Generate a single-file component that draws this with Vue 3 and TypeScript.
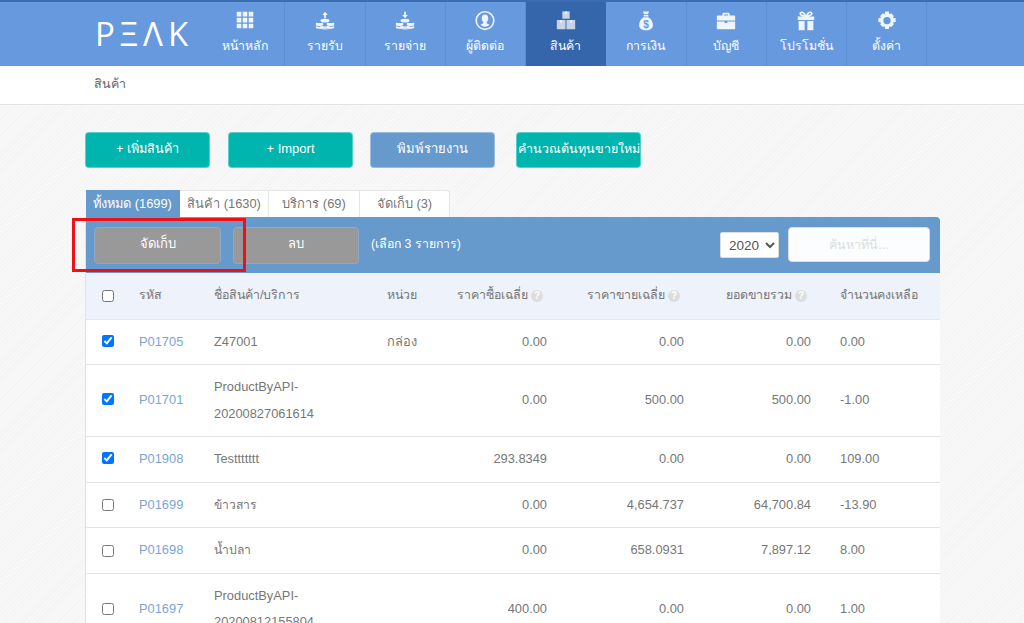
<script setup lang="ts">
interface Product {
  checked: boolean
  code: string
  name: string[]
  unit: string
  buy: string
  sell: string
  total: string
  remain: string
  thai?: boolean
}

const navItems = [
  { key: 'home', label: 'หน้าหลัก' },
  { key: 'income', label: 'รายรับ' },
  { key: 'expense', label: 'รายจ่าย' },
  { key: 'contact', label: 'ผู้ติดต่อ' },
  { key: 'product', label: 'สินค้า', active: true },
  { key: 'money', label: 'การเงิน' },
  { key: 'account', label: 'บัญชี' },
  { key: 'promo', label: 'โปรโมชั่น' },
  { key: 'setting', label: 'ตั้งค่า' },
]

const tabs = [
  { label: 'ทั้งหมด (1699)', width: 94, active: true },
  { label: 'สินค้า (1630)', width: 89 },
  { label: 'บริการ (69)', width: 91 },
  { label: 'จัดเก็บ (3)', width: 90 },
]

const products: Product[] = [
  { checked: true, code: 'P01705', name: ['Z47001'], unit: 'กล่อง', buy: '0.00', sell: '0.00', total: '0.00', remain: '0.00' },
  { checked: true, code: 'P01701', name: ['ProductByAPI-', '20200827061614'], unit: '', buy: '0.00', sell: '500.00', total: '500.00', remain: '-1.00' },
  { checked: true, code: 'P01908', name: ['Testtttttt'], unit: '', buy: '293.8349', sell: '0.00', total: '0.00', remain: '109.00' },
  { checked: false, code: 'P01699', name: ['ข้าวสาร'], unit: '', buy: '0.00', sell: '4,654.737', total: '64,700.84', remain: '-13.90', thai: true },
  { checked: false, code: 'P01698', name: ['น้ำปลา'], unit: '', buy: '0.00', sell: '658.0931', total: '7,897.12', remain: '8.00', thai: true },
  { checked: false, code: 'P01697', name: ['ProductByAPI-', '20200812155804'], unit: '', buy: '400.00', sell: '0.00', total: '0.00', remain: '1.00' },
]
</script>

<template>
  <div class="page">
    <header class="topbar">
      <div class="logo">PΞΛK</div>
      <nav class="menu">
        <a v-for="item in navItems" :key="item.key" class="menu-item" :class="{ active: item.active }">
          <svg class="menu-icon" viewBox="0 0 24 24" fill="currentColor">
            <template v-if="item.key === 'home'">
              <path d="M3 2h5v5H3zM9.500 2h5v5h-5zM16 2h5v5h-5zM3 8.500h5v5H3zM9.500 8.500h5v5h-5zM16 8.500h5v5h-5zM3 15h5v5H3zM9.500 15h5v5h-5zM16 15h5v5h-5z" />
            </template>
            <template v-else-if="item.key === 'income' || item.key === 'expense'">
              <path v-if="item.key === 'income'" d="M12 2l3 3.500h-2V9h-2V5.500H9z" />
              <path v-else d="M11 2h2v3.500h2L12 9 9 5.500h2z" />
              <ellipse cx="12" cy="11.500" rx="5" ry="2" />
              <path d="M2 13.500c1 1 6 1 8 0v3c-2 1.200-7 1.200-8 0zM14 13.500c2 1 7 1 8 0v3c-1 1.200-6 1.200-8 0zM2 17.500c1 1 6 1 8 0v2c-2 1.200-7 1.200-8 0zM14 17.500c2 1 7 1 8 0v2c-1 1.200-6 1.200-8 0z" />
              <path d="M7 17c2 1 8 1 10 0v3.500c-2 1.200-8 1.200-10 0z" opacity=".8" />
            </template>
            <template v-else-if="item.key === 'contact'">
              <path fill-rule="evenodd" d="M12 1a10.500 10.500 0 1 0 0 21 10.500 10.500 0 0 0 0-21zm0 1.800a8.700 8.700 0 1 1 0 17.400 8.700 8.700 0 0 1 0-17.400z" />
              <path d="M12 5c2.300 0 3.600 1.800 3.600 4s-1 3.500-1.800 4.200v1.300l3.200 1.700a7 7 0 0 1-10 0l3.200-1.700v-1.300C9.400 12.500 8.400 11.200 8.400 9c0-2.200 1.300-4 3.600-4z" />
            </template>
            <template v-else-if="item.key === 'product'">
              <path d="M8 1.500h8v8H8z" opacity=".8" />
              <path d="M2 11h9.500v10H2zM12.500 11H22v10h-9.500z" opacity=".8" />
              <path d="M11 1.500h2v3h-2zM5.500 11h2v3h-2zM16.500 11h2v3h-2z" />
            </template>
            <template v-else-if="item.key === 'money'">
              <path d="M8.500 1.500h7l-1.500 3h-4zM9.500 5.500h5v1.500h-5zM9.500 8C6 10 4.500 13.500 4.500 16.500c0 3.500 3 5.500 7.500 5.500s7.500-2 7.500-5.500c0-3-1.500-6.500-5-8.500z" />
              <text x="12" y="19.500" text-anchor="middle" class="dollar">$</text>
            </template>
            <template v-else-if="item.key === 'account'">
              <path fill-rule="evenodd" d="M8 6V4.500C8 3.700 8.700 3 9.500 3h5c.8 0 1.500.7 1.500 1.500V6h5c.6 0 1 .4 1 1v4.500H2V7c0-.6.4-1 1-1zm1.800 0h4.400V4.800H9.800z" />
              <path d="M2 12.500h8.500v1.800h3v-1.800H22V20c0 .6-.4 1-1 1H3c-.6 0-1-.4-1-1z" />
            </template>
            <template v-else-if="item.key === 'promo'">
              <path fill-rule="evenodd" d="M3 7h6.500C7 7 4.800 6 4.800 3.800 4.800 2.500 5.900 1.500 7.300 1.500c2.200 0 3.800 1.900 4.700 4 .9-2.100 2.500-4 4.700-4 1.400 0 2.500 1 2.500 2.300C19.200 6 17 7 14.500 7H21v4H3zM7.300 3.200c-.4 0-.8.300-.8.700 0 1 1.800 1.500 3.400 1.600-.6-1.200-1.500-2.300-2.600-2.300zm9.400 0c-1.100 0-2 1.100-2.600 2.300 1.600-.1 3.400-.6 3.400-1.600 0-.4-.4-.7-.8-.7z" />
              <path d="M4 12h6.500v10H4zM13.500 12H20v10h-6.500z" />
            </template>
            <template v-else>
              <path fill-rule="evenodd" d="M10 1.500h4l.6 3 2-.9 2.900 2.900-1 2 3 .6v4l-3 .6 1 2-2.900 2.900-2-1-.6 3h-4l-.6-3-2 1-2.900-2.900 1-2-3-.6v-4l3-.6-1-2 2.900-2.900 2 .9zM12 7.500a4 4 0 1 0 0 8 4 4 0 0 0 0-8z" />
            </template>
          </svg>
          <span>{{ item.label }}</span>
        </a>
      </nav>
    </header>

    <div class="crumb">สินค้า</div>

    <main class="content">
      <div class="actions">
        <button class="btn teal thai-text">+ เพิ่มสินค้า</button>
        <button class="btn teal">+ Import</button>
        <button class="btn blue">พิมพ์รายงาน</button>
        <button class="btn teal narrow">คำนวณต้นทุนขายใหม่</button>
      </div>

      <div class="tabs">
        <a v-for="tab in tabs" :key="tab.label" class="tab" :class="{ active: tab.active }" :style="{ width: tab.width + 'px' }">{{ tab.label }}</a>
      </div>

      <section class="panel">
        <div class="toolbar">
          <button class="btn grey">จัดเก็บ</button>
          <button class="btn grey">ลบ</button>
          <span class="selected">(เลือก 3 รายการ)</span>
          <select class="year">
            <option>2020</option>
          </select>
          <input class="search" placeholder="ค้นหาที่นี่..." />
        </div>
        <div class="highlight"></div>

        <table class="grid">
          <colgroup>
            <col style="width: 41px" />
            <col style="width: 75px" />
            <col style="width: 158px" />
            <col style="width: 69px" />
            <col style="width: 130px" />
            <col style="width: 137px" />
            <col style="width: 127px" />
            <col />
          </colgroup>
          <thead>
            <tr>
              <th class="check"><input type="checkbox" /></th>
              <th>รหัส</th>
              <th>ชื่อสินค้า/บริการ</th>
              <th class="num">หน่วย</th>
              <th class="num">ราคาซื้อเฉลี่ย <i class="help">?</i></th>
              <th class="num">ราคาขายเฉลี่ย <i class="help">?</i></th>
              <th class="num">ยอดขายรวม <i class="help">?</i></th>
              <th class="remain">จำนวนคงเหลือ</th>
            </tr>
          </thead>
          <tbody>
            <tr v-for="p in products" :key="p.code">
              <td class="check"><input type="checkbox" :checked="p.checked" :class="{ ticked: p.checked }" /></td>
              <td><a class="code">{{ p.code }}</a></td>
              <td :class="{ 'thai-text': p.thai }">
                <div v-for="line in p.name" :key="line">{{ line }}</div>
              </td>
              <td class="num">{{ p.unit }}</td>
              <td class="num">{{ p.buy }}</td>
              <td class="num">{{ p.sell }}</td>
              <td class="num">{{ p.total }}</td>
              <td class="remain">{{ p.remain }}</td>
            </tr>
          </tbody>
        </table>
      </section>
    </main>
  </div>
</template>

<style scoped>
.page {
  width: 1024px;
  height: 623px;
  overflow: hidden;
  font-family: "Liberation Sans", "Noto Sans", sans-serif;
  font-size: 13px;
  color: #777;
  background-color: #f6f6f6;
  background-image: repeating-linear-gradient(135deg, #f4f4f4 0, #f4f4f4 1px, #f8f8f8 1px, #f8f8f8 3px);
}

.topbar {
  display: flex;
  height: 66px;
  box-sizing: border-box;
  border-top: 2px solid #3b6db5;
  background: #6699dd;
}

.logo {
  width: 205px;
  box-sizing: border-box;
  padding: 15px 0 0 95px;
  color: #fff;
  font-family: "Open Sans", sans-serif;
  font-size: 33px;
  font-weight: 400;
  line-height: 34px;
  letter-spacing: 5px;
}

.menu {
  display: flex;
}

.menu-item {
  display: flex;
  flex-direction: column;
  align-items: center;
  width: 80.25px;
  box-sizing: border-box;
  padding-top: 8px;
  border-right: 1px solid #5c8fd3;
  color: #fff;
  font-size: 12.3px;
  line-height: 20px;
}

.menu-item.active {
  background: #3566ab;
  border-right-color: #3566ab;
}

.menu-icon {
  width: 22px;
  height: 22px;
  margin-bottom: 4px;
  opacity: 0.9;
}

.dollar {
  fill: #6699dd;
  font-size: 11px;
  font-weight: 700;
}

.crumb {
  height: 39px;
  box-sizing: border-box;
  padding-left: 94px;
  border-bottom: 1px solid #e3e3e3;
  background: #fff;
  color: #666;
  font-size: 12.5px;
  line-height: 37px;
}

.content {
  padding: 27px 84px 0 86px;
}

.actions {
  display: flex;
  margin-left: -1px;
  gap: 18px;
}

.btn {
  width: 125px;
  height: 36px;
  padding: 0 0 3px;
  border: 1px solid rgba(255, 255, 255, 0.35);
  border-radius: 4px;
  color: #fff;
  font-family: inherit;
  font-size: 13px;
}

.teal {
  background: #00b5ad;
}

.blue {
  margin-left: -1px;
  background: #6699cc;
}

.narrow {
  margin-left: 3px;
  font-size: 12.5px;
  white-space: nowrap;
}

.btn.thai-text {
  font-size: 12.7px;
}

.tabs {
  display: flex;
  margin-top: 22px;
}

.tab {
  height: 27px;
  box-sizing: border-box;
  border: 1px solid #e6e6e6;
  border-bottom: 0;
  border-left: 0;
  background: #fff;
  font-size: 12.85px;
  text-align: center;
  line-height: 25px;
  white-space: nowrap;
}

.tab:last-child {
  border-radius: 0 4px 0 0;
}

.tab.active {
  background: #6699cc;
  border-color: #6699cc;
  color: #fff;
}

.panel {
  position: relative;
  width: 854px;
  box-shadow: -1px 0 0 #e2e2e2;
  background: #fff;
}

.toolbar {
  display: flex;
  align-items: center;
  height: 56px;
  box-sizing: border-box;
  padding: 0 10px 0 8px;
  border-radius: 0 4px 0 0;
  background: #6699cc;
}

.grey {
  width: 127px;
  height: 37px;
  background: #999;
  border-color: #8fa9c9;
}

.grey + .grey {
  width: 126px;
  margin-left: 12px;
}

.selected {
  margin: 0 0 4px 12px;
  color: #fff;
  font-size: 12.3px;
}

.year {
  width: 59px;
  height: 26px;
  margin-left: auto;
  padding-left: 4px;
  border: 1px solid #ddd;
  border-radius: 2px;
  background: #fff;
  color: #555;
  font-family: inherit;
  font-size: 13.5px;
}

.search {
  width: 142px;
  height: 35px;
  box-sizing: border-box;
  margin: 0 0 1px 9px;
  border: 1px solid #ddd;
  border-radius: 4px;
  background: #fbfdfe;
  font-family: inherit;
  font-size: 12.5px;
  text-align: center;
}

.search::placeholder {
  color: #ddd;
}

.highlight {
  position: absolute;
  left: -14px;
  top: 1px;
  width: 174px;
  height: 54px;
  box-sizing: border-box;
  border: 3px solid #f00f14;
}

.grid {
  width: 100%;
  table-layout: fixed;
  border-collapse: collapse;
  font-size: 12.85px;
}

.grid th {
  height: 46px;
  padding: 0 12px 3px;
  box-sizing: border-box;
  background: #eef3fb;
  border-bottom: 1px solid #e4e7ec;
  font-size: 12.4px;
  font-weight: 400;
  text-align: left;
  white-space: nowrap;
}

.grid td {
  padding: 9px 12px;
  border-bottom: 1px solid #e3e3e3;
  line-height: 26.5px;
  white-space: nowrap;
}

.grid td.thai-text {
  font-size: 12.2px;
}

.grid .check {
  padding: 0 0 0 16px;
}

.check input {
  width: 12px;
  height: 12px;
  margin: 0;
  vertical-align: middle;
}

.check input.ticked {
  margin-bottom: 3px;
}

.grid .num {
  text-align: right;
}

.grid .remain {
  padding-left: 17px;
  padding-right: 0;
}

.code {
  color: #7ba4d6;
}

.help {
  display: inline-block;
  width: 12px;
  height: 12px;
  margin-right: 4px;
  border-radius: 50%;
  background: #ddd;
  color: #fff;
  font-size: 10px;
  font-style: normal;
  font-weight: 700;
  line-height: 12px;
  text-align: center;
}
</style>
